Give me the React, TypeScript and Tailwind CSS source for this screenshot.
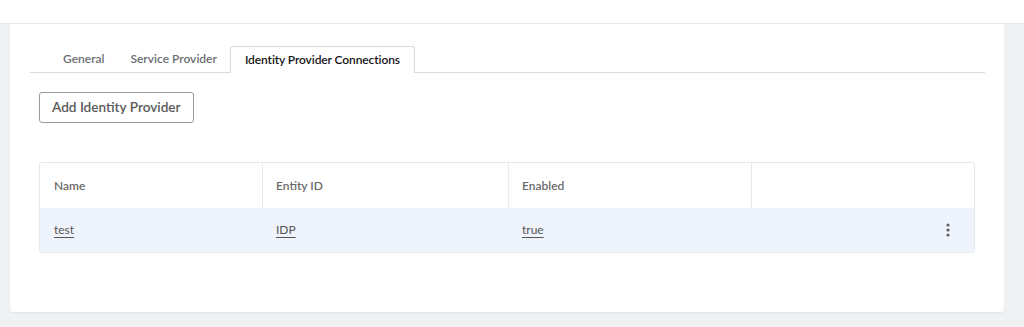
import React from "react";

export default function App() {
  const font = { fontFamily: "Lato, 'Noto Sans', sans-serif" };
  return (
    <div className="w-[1024px] h-[327px] bg-[#f0f1f2] overflow-hidden" style={font}>
      <div className="h-[24px] bg-white border-b border-[#e6e7e8]" />
      <div className="pl-[10px] pr-[20px]">
        <div className="bg-white h-[288px] rounded-b-[3px] shadow-[0_1px_2px_rgba(0,0,0,0.06)] flex flex-col">
          <div className="ml-[20px] mr-[19px] mt-[22px] flex items-end border-b border-[#d9dadb] h-[27px]">
            <div className="ml-[20px] px-[13px] h-[26px] flex items-center text-[12px] font-semibold text-[#6a6e73]">General</div>
            <div className="px-[13px] h-[26px] flex items-center text-[12px] font-semibold text-[#6a6e73]">Service Provider</div>
            <div className="px-[14px] h-[27px] -mb-px flex items-center text-[12px] tracking-[-0.1px] font-semibold text-[#151515] bg-white border border-b-0 border-[#d9dadb] rounded-t-[3px]">Identity Provider Connections</div>
          </div>
          <div className="px-[29px]">
            <div className="mt-[19px]">
              <button className="h-[31px] px-[12px] border border-[#9a9a9a] rounded-[3px] text-[13.6px] font-semibold text-[#5a5a5a]">Add Identity Provider</button>
            </div>
            <div className="mt-[39px] border border-[#e6e7e8] rounded-[3px] overflow-hidden">
              <div className="grid grid-cols-[223px_246px_243px_1fr] h-[45px] text-[12px] font-semibold text-[#6a6a6a]">
                <div className="px-[14px] flex items-center border-r border-[#ebebeb]">Name</div>
                <div className="px-[13px] flex items-center border-r border-[#ebebeb]">Entity ID</div>
                <div className="px-[13px] flex items-center border-r border-[#ebebeb]">Enabled</div>
                <div />
              </div>
              <div className="grid grid-cols-[223px_246px_243px_1fr] h-[44px] bg-[#eef3fc] text-[12px] text-[#555]">
                <div className="px-[14px] flex items-center"><span className="underline underline-offset-[3px] decoration-[#555]">test</span></div>
                <div className="px-[13px] flex items-center"><span className="underline underline-offset-[3px]">IDP</span></div>
                <div className="px-[13px] flex items-center"><span className="underline underline-offset-[3px]">true</span></div>
                <div className="flex items-center justify-end pr-[24px]">
                  <svg width="4" height="14" viewBox="0 0 4 14">
                    <circle cx="2" cy="2" r="1.6" fill="#5f6368" />
                    <circle cx="2" cy="7" r="1.6" fill="#5f6368" />
                    <circle cx="2" cy="12" r="1.6" fill="#5f6368" />
                  </svg>
                </div>
              </div>
            </div>
          </div>
        </div>
      </div>
    </div>
  );
}
